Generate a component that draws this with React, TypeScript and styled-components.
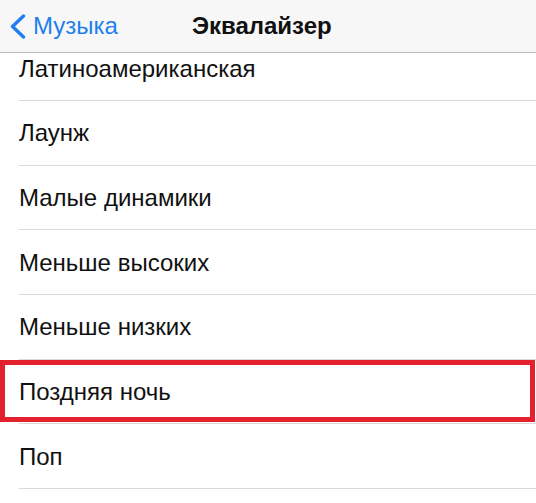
import React from "react";
import styled, { createGlobalStyle } from "styled-components";

const Global = createGlobalStyle`
  html, body { margin: 0; padding: 0; background: #ffffff; }
  body { font-family: "Liberation Sans", Arial, sans-serif; overflow: hidden; }
`;

const Screen = styled.div`
  width: 536px;
  height: 503px;
  overflow: hidden;
  background: #ffffff;
  display: flex;
  flex-direction: column;
`;

const NavBar = styled.header`
  flex: 0 0 auto;
  height: 52px;
  background: #f7f7f7;
  border-bottom: 1px solid #b9b9b9;
  display: flex;
  align-items: center;
  padding-left: 9px;
  position: relative;
  z-index: 1;
`;

const BackButton = styled.div`
  display: flex;
  align-items: center;
  gap: 7px;
  color: #1f7ff0;
  font-size: 24px;
`;

const Title = styled.div`
  margin-left: 74px;
  font-size: 24px;
  font-weight: 700;
  color: #111111;
`;

const List = styled.div`
  flex: 1 1 auto;
  overflow: hidden;
`;

const Rows = styled.div`
  margin-top: -16.7px;
`;

const Row = styled.div`
  position: relative;
  height: 64.7px;
  display: flex;
  align-items: center;
  padding-left: 19px;
  font-size: 24px;
  color: #111111;
  &::after {
    content: "";
    position: absolute;
    left: 19px;
    right: 0;
    bottom: 0;
    height: 1px;
    background: #d9d9d9;
  }
`;

const Highlight = styled.div`
  position: absolute;
  top: 0;
  left: 0;
  right: 1px;
  bottom: 2px;
  border: 5px solid #e3212c;
  z-index: 1;
  pointer-events: none;
`;

const items = [
  "Латиноамериканская",
  "Лаунж",
  "Малые динамики",
  "Меньше высоких",
  "Меньше низких",
  "Поздняя ночь",
  "Поп",
];

export default function App() {
  return (
    <>
      <Global />
      <Screen>
        <NavBar>
          <BackButton>
            <svg width="17" height="25" viewBox="0 0 17 25" fill="none">
              <path
                d="M14.5 2 L3.5 12.5 L14.5 23"
                stroke="#1f7ff0"
                strokeWidth="3.4"
                strokeLinecap="round"
                strokeLinejoin="round"
              />
            </svg>
            Музыка
          </BackButton>
          <Title>Эквалайзер</Title>
        </NavBar>
        <List>
          <Rows>
            {items.map((t) => (
              <Row key={t}>
                {t}
                {t === "Поздняя ночь" && <Highlight />}
              </Row>
            ))}
          </Rows>
        </List>
      </Screen>
    </>
  );
}
